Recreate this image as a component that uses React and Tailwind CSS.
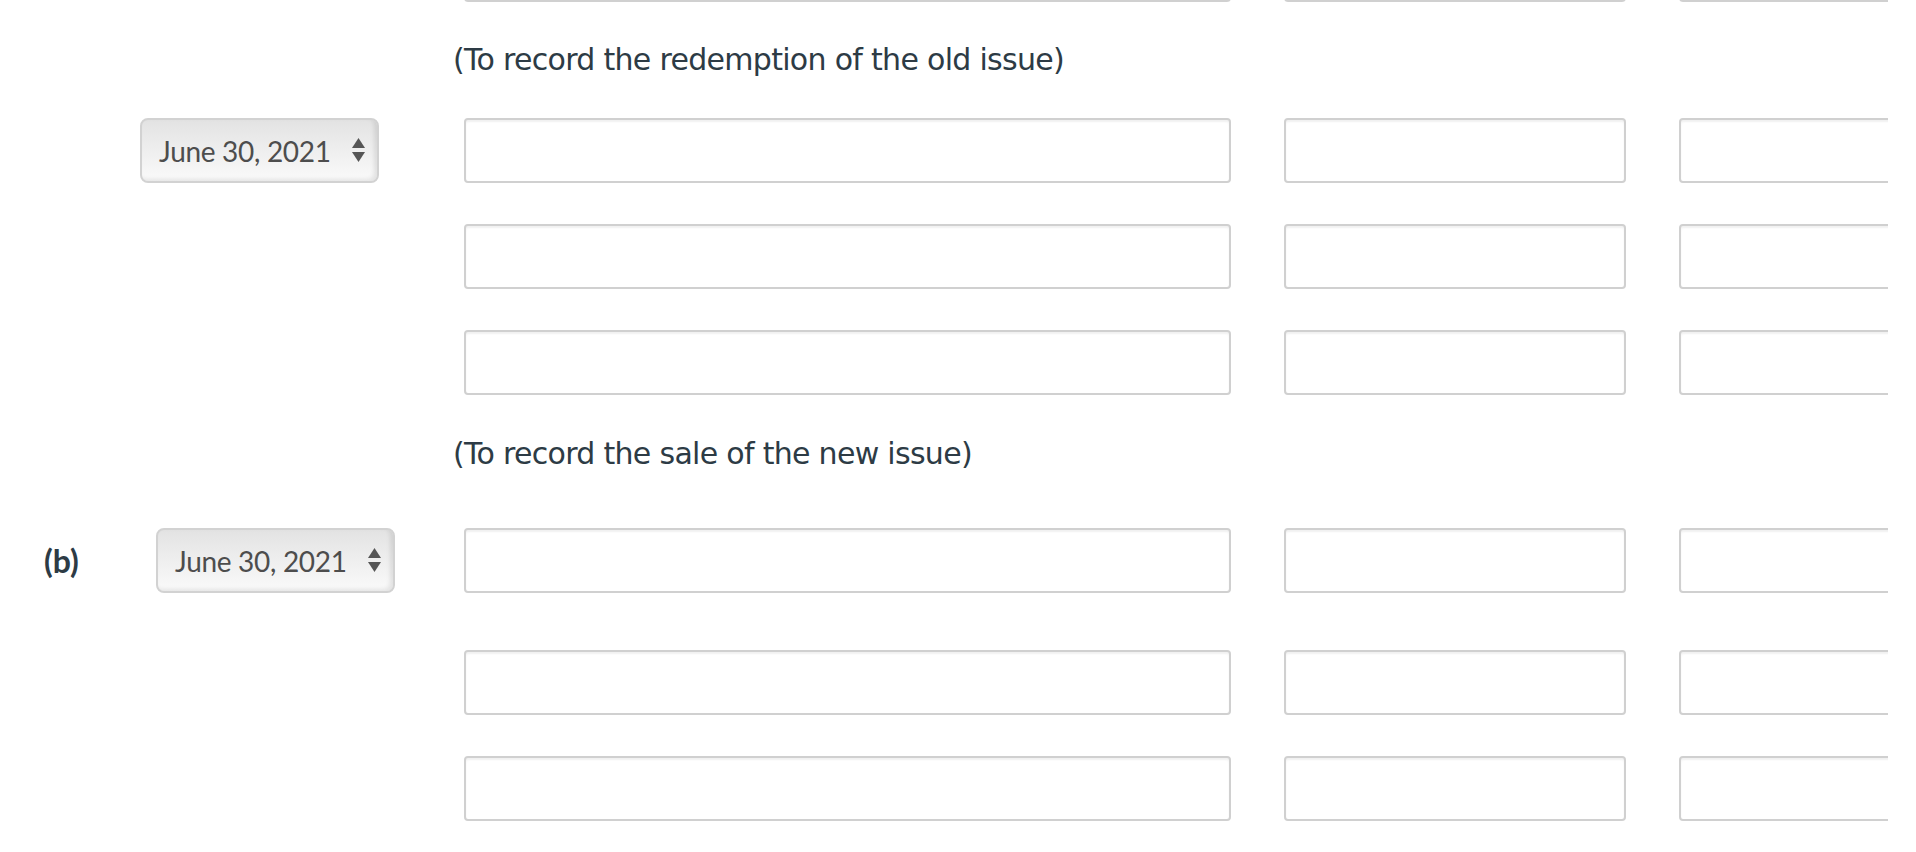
import React from "react";

const inputCls =
  "h-[65px] shrink-0 rounded-[4px] border-2 border-[#d0d0d0] bg-white shadow-[inset_0_2px_2px_rgba(0,0,0,0.06)] outline-none";

function Inputs() {
  return (
    <div className="flex shrink-0 gap-[53px]">
      <input className={`w-[767px] ${inputCls}`} />
      <input className={`w-[342px] ${inputCls}`} />
      <input className={`w-[342px] ${inputCls}`} />
    </div>
  );
}

function DateSelect() {
  return (
    <div className="flex h-[65px] w-[239px] shrink-0 items-center justify-between rounded-[8px] border-2 border-[#d2d2d2] bg-linear-to-b from-[#e3e3e3] to-[#fafafa] pl-[17px] pr-[12px] shadow-[inset_-3px_-2px_4px_rgba(0,0,0,0.09)]">
      <span className="font-['Lato',sans-serif] text-[28px] leading-none tracking-[-0.3px] text-[#4d4d4d]">
        June 30, 2021
      </span>
      <svg width="13" height="25" viewBox="0 0 13 25" className="shrink-0">
        <polygon points="6.5,0 13,10 0,10" fill="#555" />
        <polygon points="0,14 13,14 6.5,24" fill="#555" />
      </svg>
    </div>
  );
}

function Row({ left, className = "" }) {
  return (
    <div className={`flex items-center ${className}`}>
      <div className="flex w-[464px] shrink-0 items-center">{left}</div>
      <Inputs />
    </div>
  );
}

function Note({ children, className = "" }) {
  return (
    <div
      className={`pl-[453px] font-['DejaVu_Sans',sans-serif] text-[30px] leading-[36px] tracking-[-0.7px] text-[#2d3b45] ${className}`}
    >
      {children}
    </div>
  );
}

export default function App() {
  return (
    <div className="min-h-[852px] bg-white">
      <div className="w-[1888px] overflow-hidden">
        {/* tail of the previous entry */}
        <div className="flex h-[2px] items-end overflow-hidden">
          <div className="w-[464px] shrink-0" />
          <Inputs />
        </div>

        <Note className="mt-[40px]">(To record the redemption of the old issue)</Note>

        <Row
          className="mt-[40px]"
          left={
            <div className="pl-[140px]">
              <DateSelect />
            </div>
          }
        />
        <Row className="mt-[41px]" />
        <Row className="mt-[41px]" />

        <Note className="mt-[41px]">(To record the sale of the new issue)</Note>

        <Row
          className="mt-[56px]"
          left={
            <>
              <div className="w-[156px] shrink-0 pl-[44px] font-['Lato',sans-serif] text-[32px] font-bold text-[#2d3b45]">
                (b)
              </div>
              <DateSelect />
            </>
          }
        />
        <Row className="mt-[57px]" />
        <Row className="mt-[41px]" />
      </div>
    </div>
  );
}
